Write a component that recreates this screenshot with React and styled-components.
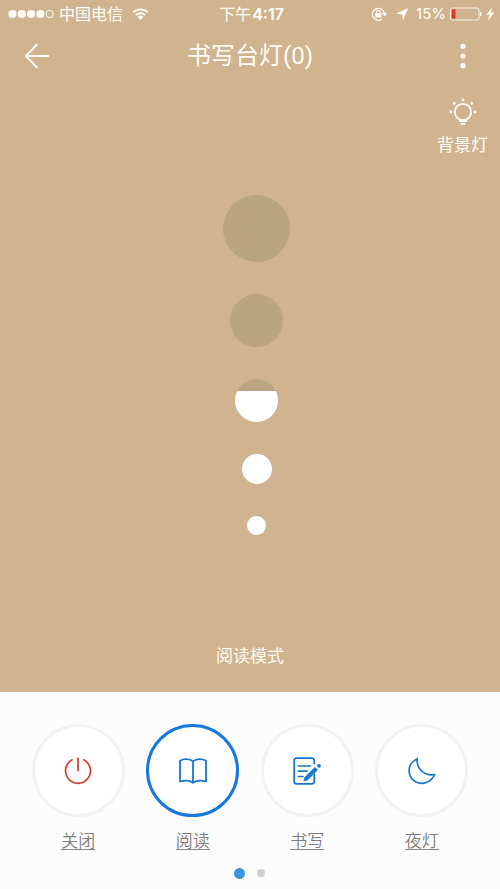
import React, { useState } from "react";
import styled, { createGlobalStyle } from "styled-components";

const GlobalStyle = createGlobalStyle`
  * { box-sizing: border-box; }
  body {
    margin: 0;
    font-family: Inter, "Noto Sans CJK SC", sans-serif;
  }
  button {
    margin: 0;
    padding: 0;
    border: 0;
    background: none;
    color: inherit;
    font: inherit;
    cursor: pointer;
  }
  svg { display: block; }
`;

const Page = styled.div`
  display: flex;
  flex-direction: column;
  min-height: 100vh;
  background: #d0b48f;
  color: #fffdf6;
`;

const StatusBar = styled.div`
  display: grid;
  grid-template-columns: 1fr auto 1fr;
  align-items: center;
  height: 28px;
  padding: 0 5px 0 8px;
  font-size: 16px;
  line-height: 20px;
`;

const StatusGroup = styled.div`
  display: flex;
  align-items: center;
  justify-content: ${(p) => (p.$end ? "flex-end" : "flex-start")};
  gap: ${(p) => (p.$end ? 4 : 5)}px;
  white-space: nowrap;
`;

const Carrier = styled.span`
  margin-right: 4px;
`;

const Time = styled.time`
  display: flex;
  gap: 1px;
`;

const Clock = styled.span`
  font-weight: 600;
`;

const Battery = styled.span`
  font-size: 15px;
`;

const Header = styled.header`
  display: grid;
  grid-template-columns: 48px 1fr 48px;
  align-items: center;
  height: 56px;
  padding: 0 13px;
`;

const IconButton = styled.button`
  display: flex;
  align-items: center;
  justify-content: center;
  height: 48px;
`;

const Title = styled.h1`
  margin: 0;
  font-family: Roboto, "Noto Sans CJK SC", sans-serif;
  font-size: 24px;
  font-weight: 400;
  line-height: 32px;
  text-align: center;
`;

const Main = styled.main`
  display: flex;
  flex: 1;
  flex-direction: column;
  align-items: center;
  padding-bottom: 25px;
`;

const BackLight = styled.button`
  display: flex;
  flex-direction: column;
  align-items: center;
  align-self: flex-end;
  gap: 4px;
  margin: 14px 12px 0 0;
  font-family: "Noto Sans CJK SC", sans-serif;
  font-size: 17px;
  line-height: 28px;
`;

const Levels = styled.div`
  display: flex;
  flex-direction: column;
  align-items: center;
  gap: 32px;
  margin-top: 37px;
  padding-left: 13px;
`;

const Level = styled.button`
  width: ${(p) => p.$size}px;
  height: ${(p) => p.$size}px;
  border-radius: 50%;
  background: linear-gradient(
    to top,
    #fff ${(p) => p.$fill}%,
    #bba480 ${(p) => p.$fill}%
  );
`;

const ModeName = styled.p`
  margin: auto 0 0;
  font-family: "Noto Sans CJK SC", sans-serif;
  font-size: 17px;
  line-height: 24px;
`;

const Panel = styled.nav`
  padding: 32px 21px 10px;
  background: #fcfcfc;
`;

const Modes = styled.div`
  display: grid;
  grid-template-columns: repeat(4, 1fr);
`;

const Mode = styled.button`
  display: flex;
  flex-direction: column;
  align-items: center;
  gap: 14px;
  color: #7d7d7d;
  font-family: "Noto Sans CJK SC", sans-serif;
  font-size: 17px;
`;

const Ring = styled.span`
  display: flex;
  align-items: center;
  justify-content: center;
  width: 93px;
  height: 93px;
  border: 3px solid ${(p) => (p.$active ? "#1478dc" : "#f2f2f2")};
  border-radius: 50%;
  background: #fff;
  color: ${(p) => (p.$danger ? "#d13f31" : "#1775d0")};
`;

const ModeLabel = styled.span`
  border-bottom: 1px solid #858585;
  font-weight: 350;
  line-height: 18px;
`;

const Pager = styled.div`
  display: flex;
  align-items: center;
  justify-content: center;
  gap: 12px;
  height: 12px;
  margin-top: 17px;
  padding-right: 2px;
`;

const PageDot = styled.button`
  width: ${(p) => (p.$active ? 11 : 8)}px;
  height: ${(p) => (p.$active ? 11 : 8)}px;
  border-radius: 50%;
  background: ${(p) => (p.$active ? "#3c93e3" : "#cfcfcf")};
`;

const stroke = {
  fill: "none",
  stroke: "currentColor",
  strokeLinecap: "round",
  strokeLinejoin: "round",
};

const Signal = () => (
  <svg width="46" height="10" viewBox="0 0 46 10" aria-label="信号">
    {[4.5, 13.8, 23.1, 32.4].map((x) => (
      <circle key={x} cx={x} cy="5" r="4.1" fill="currentColor" />
    ))}
    <circle cx="41.7" cy="5" r="3.6" fill="none" stroke="currentColor" />
  </svg>
);

const Wifi = () => (
  <svg width="17" height="14" viewBox="0 0 18 14" aria-label="Wi-Fi">
    <path d="M1.3 5.2a11 11 0 0 1 15.4 0M4 8.2a7 7 0 0 1 10 0" fill="none" stroke="currentColor" strokeWidth="2" />
    <path d="M9 13.4 5.9 10.2a4.4 4.4 0 0 1 6.2 0z" fill="currentColor" />
  </svg>
);

const RotationLock = () => (
  <svg width="17" height="14" viewBox="0 0 17 14" aria-hidden="true">
    <path d="M10.8 12.2A6 6 0 1 1 13.2 6" fill="none" stroke="currentColor" strokeWidth="1.2" />
    <path d="M10.8 5.8h5.4l-2.7 3.6z" fill="currentColor" />
    <path d="M4.2 6.3h6.2v4.2H4.2z" fill="currentColor" />
    <path d="M5.5 6.5V5a1.8 1.8 0 0 1 3.6 0v1.5" fill="none" stroke="currentColor" strokeWidth="1.1" />
  </svg>
);

const Location = () => (
  <svg width="20" height="14" viewBox="0 0 20 14" aria-hidden="true">
    <path d="M16.3 1 11 13.2l-.9-5.8-5.9-1z" fill="currentColor" />
  </svg>
);

const BatteryIcon = () => (
  <svg width="32" height="14" viewBox="0 0 32 14" aria-hidden="true">
    <rect x=".5" y="1" width="28.5" height="12" rx="2" fill="none" stroke="currentColor" strokeOpacity=".8" />
    <rect x="1.7" y="2.2" width="3.8" height="9.6" rx=".8" fill="#e0392b" />
    <path d="M30 4.8c2.2.5 2.2 3.9 0 4.4z" fill="currentColor" />
  </svg>
);

const Bolt = () => (
  <svg width="9" height="14" viewBox="0 0 9 14" aria-hidden="true">
    <path d="M6 .6.4 7.8h3L2 13.6l6.500-8H5z" fill="currentColor" />
  </svg>
);

const BackArrow = () => (
  <svg width="26" height="26" viewBox="0 0 26 26" aria-hidden="true">
    <path {...stroke} strokeWidth="1.8" d="M24.2 13H2M13 1.5 1.8 13 13 24.5" />
  </svg>
);

const MoreDots = () => (
  <svg width="6" height="26" viewBox="0 0 6 26" aria-hidden="true">
    {[3.3, 13, 22.7].map((y) => (
      <circle key={y} cx="3" cy={y} r="2.6" fill="currentColor" />
    ))}
  </svg>
);

const Bulb = () => (
  <svg width="28" height="28" viewBox="0 0 28 28" aria-hidden="true">
    <circle cx="14" cy="14" r="8.2" fill="none" stroke="currentColor" strokeWidth="1.8" />
    <path {...stroke} strokeWidth="1.8" d="M10.7 23h6.6M12.4 25.8h3.2" />
    {[[14, 2], [5.2, 5.4], [22.8, 5.4], [1.9, 14], [26.1, 14]].map(([x, y]) => (
      <circle key={`${x}-${y}`} cx={x} cy={y} r="1.4" fill="currentColor" />
    ))}
  </svg>
);

const PowerIcon = () => (
  <svg width="28" height="28" viewBox="0 0 28 28" aria-hidden="true">
    <path {...stroke} strokeWidth="1.7" d="M8.200 2.800a12.500 12.500 0 1 0 11.600 0M14 1v12.500" />
  </svg>
);

const BookIcon = () => (
  <svg width="28" height="26" viewBox="0 0 28 26" aria-hidden="true">
    <path {...stroke} strokeWidth="1.8" d="M14 3.400C10.800.7 5 .5 1 2.700v20.800c4.500-1.300 9.800-1.300 13 1.200 3.200-2.500 8.500-2.500 13-1.200V2.700C23 .5 17.200.7 14 3.400zM14 3.400v21.300" />
  </svg>
);

const WriteIcon = () => (
  <svg width="28" height="28" viewBox="0 0 28 28" aria-hidden="true">
    <path {...stroke} strokeWidth="1.8" d="M21.3 6.500V3.500A2.300 2.300 0 0 0 19 1.200H3.500a2.300 2.300 0 0 0-2.300 2.300v21a2.300 2.300 0 0 0 2.300 2.300H19a2.300 2.300 0 0 0 2.300-2.300V17.500" />
    <path {...stroke} strokeWidth="1.7" d="M5.500 9h12M5.500 14.200h8.500M5.500 19.500h4.500" />
    <path d="m11.600 20.600 10.400-10.300 2.600 2.600-10.400 10.300-3.400.9z" fill="currentColor" stroke="currentColor" strokeWidth=".6" />
    <circle cx="26" cy="8.800" r="1.900" fill="currentColor" />
  </svg>
);

const MoonIcon = () => (
  <svg width="28" height="28" viewBox="0 0 28 28" aria-hidden="true">
    <path {...stroke} strokeWidth="1.700" d="M9.300 1.700C2.500 4.500-.8 12 2.200 18.800c2.900 6.400 10.400 9.200 16.800 6.400 3.500-1.500 6.200-4.300 7.600-7.700C17.300 19.500 8.200 12.500 9.300 1.700z" />
  </svg>
);

const levels = [
  { size: 67, fill: 0 },
  { size: 53, fill: 0 },
  { size: 43, fill: 72 },
  { size: 30, fill: 100 },
  { size: 19, fill: 100 },
];

const modes = [
  { name: "关闭", icon: <PowerIcon />, danger: true },
  { name: "阅读", icon: <BookIcon /> },
  { name: "书写", icon: <WriteIcon /> },
  { name: "夜灯", icon: <MoonIcon /> },
];

export default function App() {
  const [active, setActive] = useState("阅读");

  return (
    <>
      <GlobalStyle />
      <Page>
        <StatusBar>
          <StatusGroup>
            <Signal />
            <Carrier>中国电信</Carrier>
            <Wifi />
          </StatusGroup>
          <Time>
            <span>下午</span>
            <Clock>4:17</Clock>
          </Time>
          <StatusGroup $end>
            <RotationLock />
            <Location />
            <Battery>15%</Battery>
            <BatteryIcon />
            <Bolt />
          </StatusGroup>
        </StatusBar>
        <Header>
          <IconButton type="button" aria-label="返回">
            <BackArrow />
          </IconButton>
          <Title>书写台灯(0)</Title>
          <IconButton type="button" aria-label="更多">
            <MoreDots />
          </IconButton>
        </Header>
        <Main>
          <BackLight type="button">
            <Bulb />
            背景灯
          </BackLight>
          <Levels role="group" aria-label="亮度">
            {levels.map((level, i) => (
              <Level
                key={level.size}
                type="button"
                aria-label={`亮度 ${levels.length - i}`}
                $size={level.size}
                $fill={level.fill}
              />
            ))}
          </Levels>
          <ModeName>{active}模式</ModeName>
        </Main>
        <Panel>
          <Modes>
            {modes.map((mode) => (
              <Mode
                key={mode.name}
                type="button"
                aria-pressed={active === mode.name}
                onClick={() => setActive(mode.name)}
              >
                <Ring $active={active === mode.name} $danger={mode.danger}>
                  {mode.icon}
                </Ring>
                <ModeLabel>{mode.name}</ModeLabel>
              </Mode>
            ))}
          </Modes>
          <Pager>
            <PageDot type="button" aria-label="第 1 页" $active />
            <PageDot type="button" aria-label="第 2 页" />
          </Pager>
        </Panel>
      </Page>
    </>
  );
}
